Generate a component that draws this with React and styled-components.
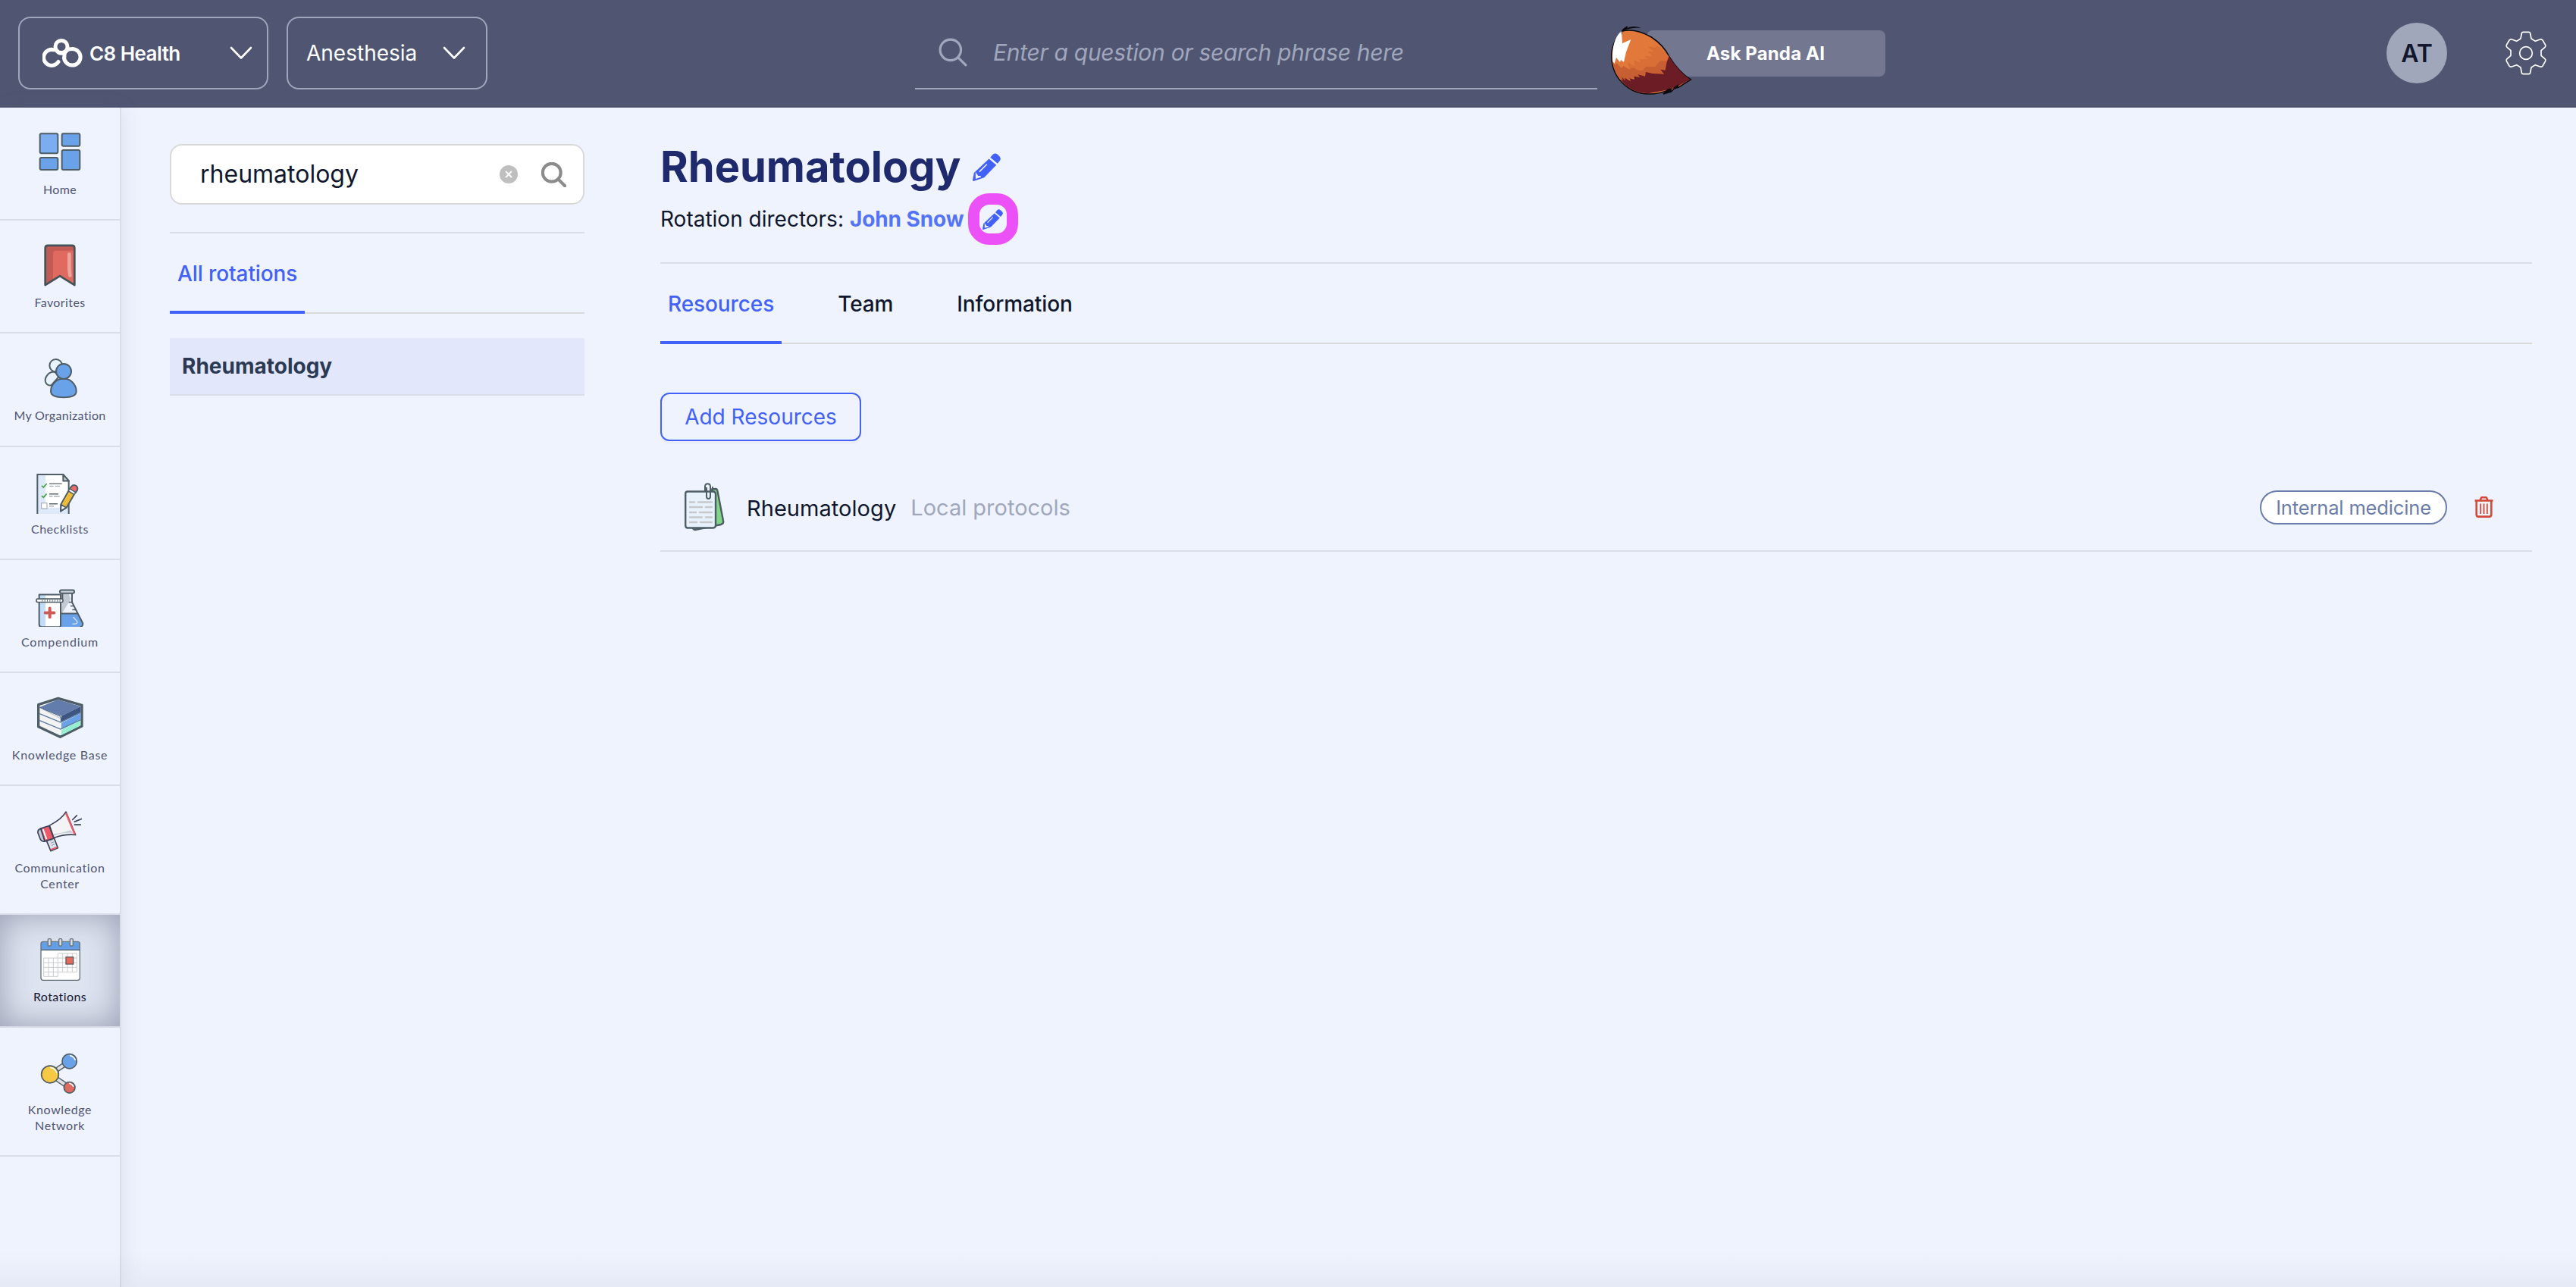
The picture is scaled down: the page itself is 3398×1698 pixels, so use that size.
import React from 'react';
import styled, { createGlobalStyle } from 'styled-components';

const GlobalStyle = createGlobalStyle`
  * {
    box-sizing: border-box;
  }
  body {
    margin: 0;
    background: #eff3fe;
    font-family: Inter, sans-serif;
    color: #0f172e;
  }
  svg {
    display: block;
    flex: none;
  }
`;

const Page = styled.div`
  position: relative;
  display: flex;
  flex-direction: column;
  height: 1698px;
  overflow: hidden;
  &::after {
    content: '';
    position: absolute;
    right: 0;
    bottom: 0;
    left: 0;
    height: 46px;
    background: linear-gradient(rgba(80, 86, 114, 0), rgba(80, 86, 114, 0.06));
    pointer-events: none;
  }
`;

const Header = styled.header`
  display: flex;
  align-items: flex-start;
  flex: none;
  height: 142px;
  padding: 22px 38px 0 24px;
  background: #505672;
`;

const Select = styled.button`
  display: flex;
  align-items: center;
  justify-content: space-between;
  width: ${(props) => props.$width}px;
  height: 96px;
  margin-right: 24px;
  padding: 0 ${(props) => props.$right}px 0 ${(props) => props.$left}px;
  border: 2px solid #9fa6bc;
  border-radius: 16px;
  background: none;
  color: white;
  font: 400 28px Inter, sans-serif;
`;

const Brand = styled.span`
  display: flex;
  align-items: center;
  gap: 9px;
  font-size: 26px;
  font-weight: 600;
  letter-spacing: -0.55px;
`;

const SearchField = styled.div`
  display: flex;
  align-items: center;
  width: 900px;
  height: 96px;
  margin-left: 540px;
  padding-left: 31px;
  border-bottom: 2px solid #9fa6bc;
  color: #a0a7bc;
  font-size: 30px;
  font-style: italic;
  letter-spacing: -0.3px;
  span {
    margin-left: 34px;
  }
`;

const AskButton = styled.div`
  position: relative;
  display: flex;
  align-items: center;
  width: 315px;
  height: 61px;
  margin: 18px 0 0 65px;
  padding-left: 79px;
  border-radius: 8px;
  background: #737790;
  color: white;
  font-size: 24px;
  font-weight: 700;
  letter-spacing: 0.15px;
  svg {
    position: absolute;
    left: -49px;
    top: -8px;
  }
`;

const Avatar = styled.div`
  display: flex;
  align-items: center;
  justify-content: center;
  width: 80px;
  height: 80px;
  margin: 8px 76px 0 auto;
  border-radius: 50%;
  background: #a1a7bb;
  color: #12172e;
  font-size: 32px;
  font-weight: 600;
`;

const GearWrap = styled.div`
  margin-top: 18px;
`;

const Body = styled.div`
  display: flex;
  flex: 1;
`;

const Sidebar = styled.nav`
  flex: none;
  width: 160px;
  border-right: 2px solid #dadde8;
  box-shadow: 4px 0 24px rgba(80, 86, 114, 0.1);
`;

const NavItem = styled.div`
  display: flex;
  flex-direction: column;
  align-items: center;
  height: ${(props) => (props.$tall ? 169.8 : 149.2)}px;
  padding-top: 28px;
  border-bottom: 2px solid #dadde8;
  background: ${(props) => (props.$active ? '#dfe4f1' : 'none')};
  box-shadow: ${(props) =>
    props.$active ? 'inset 0 0 44px rgba(80, 86, 114, 0.5)' : 'none'};
  color: ${(props) => (props.$active ? '#14152f' : '#505672')};
`;

const NavLabel = styled.span`
  width: 150px;
  margin-top: 9px;
  font: 400 16px/21px Lato, sans-serif;
  letter-spacing: ${(props) => props.$spacing || 0.4}px;
  text-align: center;
  white-space: pre-line;
`;

const Panel = styled.aside`
  flex: none;
  width: 547px;
  margin: 48px 0 0 64px;
`;

const PanelSearch = styled.div`
  display: flex;
  align-items: center;
  height: 80px;
  padding: 0 22px 0 38px;
  border: 2px solid #d9d9d9;
  border-radius: 16px;
  background: white;
  font-size: 32px;
  span {
    flex: 1;
    margin-top: -1px;
  }
  svg:last-child {
    margin-left: 31px;
  }
`;

const Tabs = styled.div`
  display: flex;
  gap: 64px;
  height: 108px;
  border-top: 2px solid #dadde8;
  box-shadow: inset 0 -2px 0 #d9d9d9;
`;

const PanelTabs = styled(Tabs)`
  margin-top: 36px;
`;

const Tab = styled.div`
  padding: 35px 10px 0;
  border-bottom: 4px solid ${(props) => (props.$active ? '#4161f8' : 'transparent')};
  color: ${(props) => (props.$active ? '#4161f8' : '#0f172e')};
  font-size: 28px;
  font-weight: 500;
  line-height: 36px;
  letter-spacing: -0.1px;
`;

const RotationItem = styled.div`
  display: flex;
  align-items: center;
  height: 76px;
  margin-top: 32px;
  padding-left: 16px;
  border-bottom: 2px solid #d9dde8;
  background: #e2e7fb;
  color: #2b3a52;
  font-size: 28px;
  font-weight: 700;
`;

const Main = styled.main`
  flex: 1;
  margin: 42px 58px 0 100px;
`;

const TitleRow = styled.div`
  display: flex;
  align-items: center;
  gap: 16px;
  height: 72px;
  h1 {
    margin: 0;
    color: #1e2a6b;
    font-size: 56px;
    font-weight: 700;
  }
`;

const Directors = styled.div`
  display: flex;
  align-items: center;
  height: 68px;
  margin: -1px 0 23px;
  font-size: 28px;
  b {
    margin-left: 8px;
    color: #5474f7;
    font-weight: 700;
    letter-spacing: -0.1px;
  }
`;

const EditMark = styled.span`
  display: flex;
  align-items: center;
  justify-content: center;
  width: 66px;
  height: 68px;
  margin-left: 6px;
  padding-right: 2px;
  border: 15px solid #ec51f8;
  border-radius: 28px;
`;

const AddButton = styled.button`
  display: block;
  width: 265px;
  height: 64px;
  margin-top: 64px;
  padding: 0;
  border: 2px solid #4161f8;
  border-radius: 12px;
  background: none;
  box-shadow: 0 4px 0 rgba(0, 0, 0, 0.02);
  color: #4161f8;
  font: 400 28px Inter, sans-serif;
`;

const Resource = styled.div`
  display: flex;
  align-items: center;
  height: 116px;
  margin-top: 30px;
  padding: 0 51px 0 32px;
  border-bottom: 2px solid #dadde8;
  font-size: 29px;
`;

const ResourceName = styled.span`
  margin: 2px 0 0 29px;
  letter-spacing: 0.05px;
`;

const ResourceKind = styled.span`
  flex: 1;
  margin-left: 19px;
  color: #a1a7bb;
`;

const Tag = styled.span`
  display: flex;
  align-items: center;
  justify-content: center;
  width: 247px;
  height: 45px;
  margin-right: 36px;
  border: 2px solid #6a7cab;
  border-radius: 23px;
  background: white;
  color: #6a7cab;
  font-size: 25.5px;
  letter-spacing: -0.15px;
`;

const Logo = () => (
  <svg width="53" height="38" viewBox="0 0 53 38" fill="none" stroke="white" strokeWidth="5">
    <path d="M21 30.5A10.5 10.5 0 1 1 15 14.8" strokeLinecap="round" />
    <circle cx="25" cy="10.5" r="8" />
    <path d="M29 25C28 16 33 13.500 39 13.500A10.800 10.800 0 1 1 28.500 24" />
    <path d="M18 15C21 20 27 21 32 16" />
  </svg>
);

const Chevron = () => (
  <svg width="30" height="18" viewBox="0 0 30 18" fill="none" stroke="white" strokeWidth="2.6">
    <path d="M2 2L15 15.500L28 2" strokeLinecap="round" strokeLinejoin="round" />
  </svg>
);

const SearchIcon = ({ size, color, weight }) => (
  <svg width={size} height={size} viewBox="0 0 36 36" fill="none" stroke={color} strokeWidth={weight}>
    <circle cx="15" cy="15" r="13" />
    <path d="M24.500 24.500L34 34" strokeLinecap="round" />
  </svg>
);

const ClearIcon = () => (
  <svg width="24" height="24" viewBox="0 0 24 24">
    <circle cx="12" cy="12" r="12" fill="#bfbfbf" />
    <path d="M8 8L16 16M16 8L8 16" stroke="white" strokeWidth="1.800" />
  </svg>
);

const Pencil = ({ size }) => (
  <svg width={size} height={size} viewBox="0 0 36.500 36.500" fill="#4161f8">
    <path d="M23 5.700L26 2Q29-.8 32 1.600L34.800 4Q37.500 7 35.200 10.200L32.400 13.500Z" />
    <path d="M21.300 7.300L30.800 15.500L15 31.700L1.200 36.400Q0 36.400 0 35L1.800 25.700Z" />
    <path d="M18.500 14.500L8.800 24.300M4.500 27L6.500 30L10.500 30.700L4.600 32.600Z" stroke="#eff3fe" strokeWidth="1.500" fill="#eff3fe" />
  </svg>
);

const Gear = () => (
  <svg width="56" height="60" viewBox="672 120 168 180" fill="none" stroke="white" strokeWidth="5" strokeLinejoin="round">
    <path d="M739 132Q740 127 745 127H767Q772 127 773 132L777 153L793 163L812 156Q818 154 822 159L833 178Q835 183 831 187L816 200V220L831 233Q835 237 833 242L822 261Q818 266 812 264L793 257L777 267L773 288Q772 293 767 293H745Q740 293 739 288L735 267L719 257L700 264Q694 266 690 261L679 242Q677 237 681 233L696 220V200L681 187Q677 183 679 178L690 159Q694 154 700 156L719 163L735 153Z" />
    <circle cx="756" cy="210" r="25" />
  </svg>
);

const Tail = () => (
  <svg width="110" height="95" viewBox="130 95 330 285">
    <path d="M181 122C160 140 138 180 138 220C138 300 200 371 285 371C320 371 345 364 366 354L343 371L374 362L386 350L405 344L452 314C420 295 390 260 366 222C350 190 325 165 296 146C270 131 225 112 181 122Z" fill="#e27839" stroke="#0c0a0e" strokeWidth="4.500" />
    <path d="M181 122C212 108 240 108 256 111Q225 97 200 110L203 102Q184 109 176 124L180 138Z" fill="#0c0a0e" />
    <path d="M178 122C150 143 139 190 143 243L150 250L157 227L172 245L175 236L187 245L196 205L215 155L181 171Z" fill="white" />
    <path d="M143 243L153 258L157 248L178 268L185 260L213 275L202 247L232 262L228 239L256 248L250 233L285 236L271 221L303 221L284 204L309 203L284 184L320 190C345 200 360 215 366 222L357 272L340 292L240 305L180 318C160 298 145 270 143 243Z" fill="#c85f33" />
    <path d="M286 186L320 192L308 178L328 184C345 196 358 212 364 224L357 240L330 240L310 264L275 262L262 278L244 278L230 268L213 268L202 247L232 262L228 239L256 248L250 233L285 236L271 221L303 221L284 204L309 203Z" fill="#d96f37" />
    <path d="M366 222L357 245L351 277L332 274L346 292L300 290L274 284L271 301L243 294L250 305L228 301L228 313L209 309L214 320L190 307L193 319L178 303L184 318L174 312C195 345 235 369 285 368L353 356L404 338L449 314C420 295 390 260 366 222Z" fill="#6b1c24" />
    <path d="M343 372L360 351L378 348L374 362ZM375 351L405 332L402 344Z" fill="#0c0a0e" />
  </svg>
);

const outline = { stroke: '#4e5d66', strokeWidth: 6, strokeLinejoin: 'round' };

const NavIcon = ({ top, children }) => (
  <svg width="72" height="60" viewBox={`129 ${top} 216 180`} fill="none">
    {children}
  </svg>
);

const HomeIcon = () => (
  <NavIcon top={90}>
    <g {...outline} fill="#6aa2e9">
      <rect x="158" y="109" width="71" height="78" rx="6" fill="#7badf0" />
      <rect x="245" y="109" width="71" height="49" rx="6" />
      <rect x="158" y="204" width="71" height="48" rx="6" />
      <rect x="245" y="174" width="71" height="78" rx="6" />
    </g>
  </NavIcon>
);

const FavoritesIcon = () => (
  <NavIcon top={537.6}>
    <path d="M179 709V562Q179 552 189 552H285Q295 552 295 562V709L237 673Z" fill="#e06a60" />
    <path d="M181 706V555H292V573H222Q210 573 210 585V688Z" fill="#c25b54" />
    <path d="M274 587V645L277 671" stroke="#eda39c" strokeWidth="14" strokeLinecap="round" />
    <path d="M179 709V562Q179 552 189 552H285Q295 552 295 562V709L237 673Z" {...outline} stroke="#445259" strokeWidth="8" />
  </NavIcon>
);

const OrganizationIcon = () => (
  <NavIcon top={985.2}>
    <g {...outline}>
      <path d="M202 1107C178 1107 174 1085 185 1069Q195 1053 215 1053L235 1070Z" fill="#e9f3fd" />
      <circle cx="221" cy="1028" r="25" fill="#e9f3fd" />
      <path d="M252 1080C275 1080 302 1098 302 1130C302 1147 280 1154 252 1154C222 1154 201 1147 201 1130C201 1098 228 1080 252 1080Z" fill="#6aa2e9" />
      <circle cx="252" cy="1051" r="30" fill="#6aa2e9" />
    </g>
  </NavIcon>
);

const ChecklistIcon = () => (
  <NavIcon top={82.8}>
    <path d="M148 107H250L272 132V267H148Z" fill="white" />
    <path d="M148 107H180V238H238L272 230V267H148Z" fill="#dde9f8" />
    <path d="M148 107H250L272 132V267H148Z" {...outline} strokeLinejoin="miter" />
    <path d="M250 107V132H272Z" fill="#c5cdd4" {...outline} />
    <path d="M165 151L172 158L185 143M165 191L172 198L185 183" stroke="#43a047" strokeWidth="5" />
    <rect x="164" y="220" width="22" height="22" fill="white" stroke="#9aa3ab" strokeWidth="3" />
    <path d="M195 143H245M195 184H231M195 223H228" stroke="#5b6570" strokeWidth="4" />
    <path d="M195 153H212M218 153H237M195 193H208M213 193H236M195 232H213" stroke="#a9b0b8" strokeWidth="4" />
    <path d="M241 225L271 172L294 185L263 238L240 252Z" fill="#f4c43c" {...outline} />
    <path d="M240 252L242 226L262 238Z" fill="white" {...outline} />
    <path d="M250 230L281 178M257 233L288 181" stroke="#d49a26" strokeWidth="2" />
    <path d="M276 163L282 155Q291 144 303 153Q311 162 303 173L298 180Z" fill="#ee6c6c" {...outline} />
    <path d="M276 163L299 178L294 186L271 172Z" fill="white" {...outline} strokeWidth="4" />
  </NavIcon>
);

const CompendiumIcon = () => (
  <NavIcon top={530.4}>
    <path d="M247 580V600L225 660V700L238 711H315Q332 707 327 692L285 610V580Z" fill="#eef3fb" />
    <path d="M247 580V610L232 658H245L280 600L272 580Z" fill="#c3c9d2" />
    <path d="M235 658H309L327 694Q330 708 315 711H235Z" fill="#6aa2e9" />
    <path d="M216 714H310Q328 712 328 697L285 613V578M247 578V600M235 658H309" {...outline} />
    <path d="M288 613H272M294 628H279M302 643H286" stroke="#4e5d66" strokeWidth="4" />
    <path d="M291 673L306 690Q308 700 288 699" stroke="#cfe2fb" strokeWidth="4" strokeLinecap="round" />
    <rect x="237" y="565" width="57" height="13" rx="6" fill="#cbd5dc" {...outline} />
    <path d="M155 585H240V711H165Q155 711 155 701Z" fill="white" />
    <path d="M155 585H180V711H165Q155 711 155 701Z" fill="#c3dcf8" />
    <path d="M155 600V583H240V705Q240 711 234 711H165Q155 711 155 701Z" {...outline} />
    <rect x="144" y="600" width="105" height="13" rx="5" fill="white" {...outline} strokeWidth="5" />
    <path d="M166 607H242" stroke="#4e5d66" strokeWidth="6" strokeDasharray="3 7" />
    <path d="M197 637V672M179 655H214" stroke="#cf5b59" strokeWidth="12" strokeLinecap="round" />
  </NavIcon>
);

const KnowledgeBaseIcon = () => (
  <NavIcon top={978}>
    <path d="M152 1019L230 994L324 1021V1104L238 1147L152 1106Z" fill="#f2f3f2" {...outline} strokeWidth="10" />
    <path d="M157 1029L229 999L319 1026L243 1064Z" fill="#627cab" />
    <path d="M243 1064L319 1026V1049L243 1087Z" fill="#3d5583" />
    <path d="M243 1092L319 1054V1076L243 1115Z" fill="#69a1e8" />
    <path d="M243 1119L319 1081V1102L243 1140Z" fill="#95efd0" />
    <path d="M157 1055L240 1089L319 1051M157 1082L240 1116L319 1079" stroke="#55789f" strokeWidth="4" />
    <path d="M170 1038L243 1075" stroke="#b6bbc0" strokeWidth="3" />
    <path d="M157 1030L237 1064Q245 1074 240 1087" stroke="#37507d" strokeWidth="3" />
  </NavIcon>
);

const CommunicationIcon = () => (
  <NavIcon top={105.6}>
    <g stroke="#3b435b" strokeWidth="5" strokeLinejoin="round" strokeLinecap="round">
      <path d="M184 238L201 279L229 267L213 225Z" fill="#dde1ea" />
      <path d="M196 178Q245 152 261 124L299 215Q257 211 213 227Z" fill="#f4f4f6" />
      <path d="M161 190L194 179L213 229L176 241Z" fill="#ee5a68" />
      <path d="M161 190Q148 195 150 207L160 233Q167 244 177 240Z" fill="#c8ccd8" />
      <path d="M287 155L304 138M295 163L322 152M295 175H319" />
    </g>
    <path d="M215 218Q250 204 290 208L279 196Q240 209 211 211Z" fill="#c4cdd9" />
    <path d="M261 129L296 213" stroke="#ee5a68" strokeWidth="7" />
    <path d="M170 192L184 232" stroke="white" strokeWidth="6" />
    <path d="M201 274L226 264" stroke="#ee5a68" strokeWidth="6" />
    <path d="M198 239L209 234M201 248L213 243M205 257L216 252" stroke="#8e96a8" strokeWidth="3" />
  </NavIcon>
);

const RotationsIcon = () => (
  <NavIcon top={615}>
    <rect x="162" y="637" width="154" height="153" rx="9" fill="white" />
    <path d="M162 670V646Q162 637 171 637H307Q316 637 316 646V670Z" fill="#649fe6" />
    <rect x="162" y="637" width="154" height="153" rx="9" {...outline} stroke="#66737a" strokeWidth="4" />
    <path d="M162 670H316" stroke="#4e5d66" strokeWidth="4" />
    <path d="M230 683H304V757H173V702H304M173 720H304M173 739H304M173 757V775H229V683M192 702V775M211 702V775M248 683V757M267 683V757M286 683V757" stroke="#cacccf" strokeWidth="3" />
    <rect x="261" y="698" width="29" height="28" fill="#e06a5d" stroke="#66565a" strokeWidth="4" />
    <g fill="#d9dde1" stroke="#66737a" strokeWidth="4">
      <rect x="190" y="626" width="12" height="28" rx="3" />
      <rect x="233" y="626" width="12" height="28" rx="3" />
      <rect x="277" y="626" width="12" height="28" rx="3" />
    </g>
  </NavIcon>
);

const NetworkIcon = () => (
  <NavIcon top={1062.6}>
    <path d="M198 1163L275 1111M198 1163L275 1215" stroke="#4e5d66" strokeWidth="20" />
    <path d="M198 1163L275 1111M198 1163L275 1215" stroke="#dfe0e2" strokeWidth="12" />
    <circle cx="198" cy="1163" r="34" fill="#f5c944" {...outline} strokeWidth="5" />
    <circle cx="275" cy="1111" r="29" fill="#6aa2e9" {...outline} strokeWidth="5" />
    <circle cx="275" cy="1215" r="22" fill="#df6a5f" {...outline} strokeWidth="5" />
    <path d="M200 1136Q218 1139 224 1156M278 1089Q292 1092 297 1105M276 1199Q286 1201 290 1210" stroke="white" strokeWidth="5" strokeLinecap="round" />
  </NavIcon>
);

const ProtocolIcon = () => (
  <svg width="53" height="64" viewBox="0 0 53 64" fill="none">
    <g stroke="#4e5d66" strokeWidth="2.400" strokeLinejoin="round">
      <path d="M36 8.500L41 8Q43 8 43.500 11L51 50Q52 54 48 55L14 62Q11 61.500 11 59Z" fill="#80d685" />
      <path d="M4 11.500H37Q41 11.500 41 15V56Q41 59.500 37 59.500H4Q1.200 59.500 1.200 56V14.500Q1.200 11.500 4 11.500Z" fill="#e8f2fc" />
    </g>
    <path d="M7 25.500H13M18 25.500H36M7 32H23M28 32H36M7 39H15M20 39H36M7 45.500H23M28 45.500H36M7 52H16M21 52H36" stroke="#c6c8ca" strokeWidth="2.400" strokeLinecap="round" />
    <path d="M27 12V5Q27 1.200 30.500 1.200Q34 1.200 34 5V18Q34 21 31.500 21Q29 21 29 18V6M37 5V12" stroke="#4e5d66" strokeWidth="2" />
  </svg>
);

const Trash = () => (
  <svg width="25" height="28" viewBox="0 0 25 28" fill="none" stroke="#d24a3a" strokeWidth="2.600">
    <path d="M.5 5.500H24.500" />
    <path d="M7.500 5L9 1.800Q9.300 1.200 10 1.200H15Q15.700 1.200 16 1.800L17.500 5" />
    <path d="M2.700 6V24Q2.700 26.600 5.500 26.600H19.500Q22.300 26.600 22.300 24V6" />
    <path d="M8.200 9.500V23M12.500 9.500V23M16.800 9.500V23" strokeWidth="1.800" />
  </svg>
);

const navItems = [
  { label: 'Home', Icon: HomeIcon },
  { label: 'Favorites', Icon: FavoritesIcon },
  { label: 'My Organization', Icon: OrganizationIcon, spacing: 0.3 },
  { label: 'Checklists', Icon: ChecklistIcon, spacing: 0.5 },
  { label: 'Compendium', Icon: CompendiumIcon, spacing: 0.8 },
  { label: 'Knowledge Base', Icon: KnowledgeBaseIcon, spacing: 0.7 },
  { label: 'Communication\nCenter', Icon: CommunicationIcon, spacing: 0.65, tall: true },
  { label: 'Rotations', Icon: RotationsIcon, active: true },
  { label: 'Knowledge\nNetwork', Icon: NetworkIcon, spacing: 0.6, tall: true },
];

function TopBar() {
  return (
    <Header>
      <Select $width={330} $left={30} $right={19}>
        <Brand>
          <Logo />
          C8 Health
        </Brand>
        <Chevron />
      </Select>
      <Select $width={265} $left={24} $right={27}>
        Anesthesia
        <Chevron />
      </Select>
      <SearchField>
        <SearchIcon size={38} color="#a0a7bc" weight={3} />
        <span>Enter a question or search phrase here</span>
      </SearchField>
      <AskButton>
        <Tail />
        Ask Panda AI
      </AskButton>
      <Avatar>AT</Avatar>
      <GearWrap>
        <Gear />
      </GearWrap>
    </Header>
  );
}

function App() {
  return (
    <>
      <GlobalStyle />
      <Page>
        <TopBar />
        <Body>
          <Sidebar>
            {navItems.map(({ label, Icon, tall, active, spacing }) => (
              <NavItem key={label} $tall={tall} $active={active}>
                <Icon />
                <NavLabel $spacing={spacing}>{label}</NavLabel>
              </NavItem>
            ))}
          </Sidebar>
          <Panel>
            <PanelSearch>
              <span>rheumatology</span>
              <ClearIcon />
              <SearchIcon size={33} color="#8c8c8c" weight={4.5} />
            </PanelSearch>
            <PanelTabs>
              <Tab $active>All rotations</Tab>
            </PanelTabs>
            <RotationItem>Rheumatology</RotationItem>
          </Panel>
          <Main>
            <TitleRow>
              <h1>Rheumatology</h1>
              <Pencil size={37} />
            </TitleRow>
            <Directors>
              Rotation directors: <b>John Snow</b>
              <EditMark>
                <Pencil size={27} />
              </EditMark>
            </Directors>
            <Tabs>
              <Tab $active>Resources</Tab>
              <Tab>Team</Tab>
              <Tab>Information</Tab>
            </Tabs>
            <AddButton>Add Resources</AddButton>
            <Resource>
              <ProtocolIcon />
              <ResourceName>Rheumatology</ResourceName>
              <ResourceKind>Local protocols</ResourceKind>
              <Tag>Internal medicine</Tag>
              <Trash />
            </Resource>
          </Main>
        </Body>
      </Page>
    </>
  );
}

export default App;
